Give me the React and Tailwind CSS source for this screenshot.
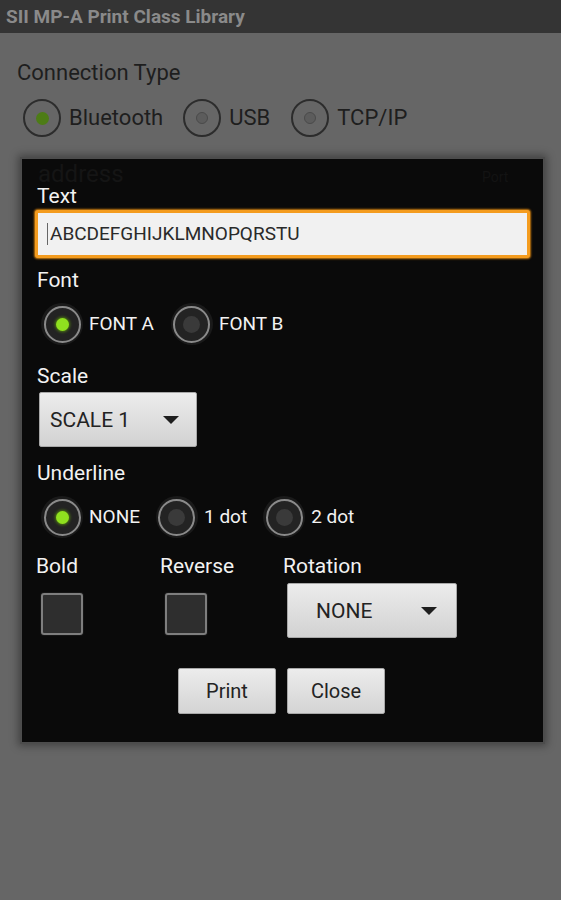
import React from "react";

function BgRadio({ checked, label, gap }) {
  return (
    <div className={"flex items-center " + gap}>
      <div className="w-[38px] h-[38px] rounded-full border-2 border-[#2c2c2c] flex items-center justify-center">
        {checked ? (
          <div className="w-[13px] h-[13px] rounded-full bg-[#4d7c16]" />
        ) : (
          <div className="w-[12px] h-[12px] rounded-full bg-[#5c5c5c] border border-[#4a4a4a]" />
        )}
      </div>
      <span className="ml-[8px] text-[22px] leading-[26px] text-[#1e1e1e]">{label}</span>
    </div>
  );
}

function Radio({ checked, label }) {
  return (
    <div className="flex items-center">
      <div className="w-[42px] h-[42px] rounded-full bg-[#1a1a1a] flex items-center justify-center">
        <div className="w-[37px] h-[37px] rounded-full border-2 border-[#8a8a8a] bg-[#232323] flex items-center justify-center">
          {checked ? (
            <div className="w-[13px] h-[13px] rounded-full bg-[#8fe01f] shadow-[0_0_3px_1px_#4f7d12]" />
          ) : (
            <div className="w-[17px] h-[17px] rounded-full bg-[#3a3a3a]" />
          )}
        </div>
      </div>
      <span className="ml-[6px] text-[19px] leading-[24px] text-[#f2f2f2]">{label}</span>
    </div>
  );
}

function Triangle() {
  return (
    <svg width="16" height="8" viewBox="0 0 16 8">
      <path d="M0 0 L16 0 L8 8 Z" fill="#1e1e1e" />
    </svg>
  );
}

function Checkbox() {
  return (
    <div className="w-[42px] h-[42px] rounded-[3px] border-2 border-[#7e7e7e] bg-[#2e2e2e] shadow-[0_0_0_1px_#151515]" />
  );
}

export default function App() {
  return (
    <div className="w-[561px] h-[900px] bg-[#666666] font-['Roboto',sans-serif] overflow-hidden">
      <div className="h-[33px] bg-[#343434] pl-[6px] flex items-center">
        <span className="text-[19px] font-bold text-[#8a8a8a] leading-none">SII MP-A Print Class Library</span>
      </div>

      <div className="pl-[17px]">
        <div className="mt-[27px] text-[22px] leading-[26px] text-[#1e1e1e]">Connection Type</div>
        <div className="mt-[13px] ml-[6px] flex items-center">
          <BgRadio checked label="Bluetooth" gap="" />
          <BgRadio label="USB" gap="ml-[20px]" />
          <BgRadio label="TCP/IP" gap="ml-[21px]" />
        </div>
      </div>

      <div className="relative mt-[20px] ml-[20px] w-[525px] h-[587px] bg-[#0a0a0a] border-2 border-[#4c4c4c] shadow-[0_0_8px_2px_rgba(0,0,0,0.35)]">
        <div className="absolute left-[16px] top-[1px] text-[24px] leading-[28px] text-[#151515]">address</div>
        <div className="absolute left-[460px] top-[9px] text-[14px] leading-[18px] text-[#131313]">Port</div>

        <div className="relative px-[13px] pt-[25px]">
          <div className="pl-[2px] text-[21px] leading-[24px] text-[#f2f2f2]">Text</div>
          <div className="mt-[2px] h-[48px] rounded-[3px] border-[3px] border-[#f49c1f] bg-[#f1f1f1] shadow-[0_0_2px_1px_#c77a10] flex items-center pl-[9px]">
            <span className="w-[1px] h-[22px] bg-[#666]" />
            <span className="ml-[2px] text-[19px] leading-[24px] text-[#2a2a2a]">ABCDEFGHIJKLMNOPQRSTU</span>
          </div>

          <div className="mt-[10px] pl-[2px] text-[21px] leading-[24px] text-[#f2f2f2]">Font</div>
          <div className="mt-[11px] ml-[6px] flex items-center gap-[17px]">
            <Radio checked label="FONT A" />
            <Radio label="FONT B" />
          </div>

          <div className="mt-[19px] pl-[2px] text-[21px] leading-[24px] text-[#f2f2f2]">Scale</div>
          <div className="mt-[4px] ml-[4px] w-[158px] h-[55px] rounded-[2px] border border-[#a8a8a8] bg-linear-to-b from-[#ececec] to-[#d2d2d2] flex items-center pl-[10px] pr-[17px] justify-between">
            <span className="text-[21px] leading-[24px] text-[#232323]">SCALE 1</span>
            <Triangle />
          </div>

          <div className="mt-[14px] pl-[2px] text-[21px] leading-[24px] text-[#f2f2f2]">Underline</div>
          <div className="mt-[11px] ml-[6px] flex items-center gap-[16px]">
            <Radio checked label="NONE" />
            <Radio label="1 dot" />
            <Radio label="2 dot" />
          </div>

          <div className="mt-[16px] flex text-[21px] leading-[24px] text-[#f2f2f2]">
            <div className="w-[124px] pl-[1px]">Bold</div>
            <div className="w-[123px] pl-[1px]">Reverse</div>
            <div className="pl-[1px]">Rotation</div>
          </div>
          <div className="mt-[5px] flex items-start">
            <div className="w-[124px] pl-[6px] pt-[10px]">
              <Checkbox />
            </div>
            <div className="w-[123px] pl-[6px] pt-[10px]">
              <Checkbox />
            </div>
            <div className="pl-[5px]">
              <div className="w-[170px] h-[55px] rounded-[2px] border border-[#a8a8a8] bg-linear-to-b from-[#ececec] to-[#d2d2d2] flex items-center pl-[28px] pr-[19px] justify-between">
                <span className="text-[21px] leading-[24px] text-[#232323]">NONE</span>
                <Triangle />
              </div>
            </div>
          </div>

          <div className="mt-[30px] flex justify-center gap-[11px] pr-[2px]">
            <div className="w-[98px] h-[46px] rounded-[2px] border border-[#a8a8a8] bg-linear-to-b from-[#ececec] to-[#d4d4d4] flex items-center justify-center text-[20px] text-[#232323]">Print</div>
            <div className="w-[98px] h-[46px] rounded-[2px] border border-[#a8a8a8] bg-linear-to-b from-[#ececec] to-[#d4d4d4] flex items-center justify-center text-[20px] text-[#232323]">Close</div>
          </div>
        </div>
      </div>
    </div>
  );
}
